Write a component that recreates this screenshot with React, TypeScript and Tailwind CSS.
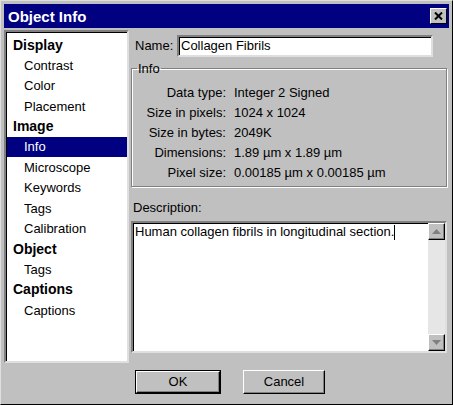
import React from 'react';

const navItems: { label: string; heading?: boolean; selected?: boolean }[] = [
  { label: 'Display', heading: true },
  { label: 'Contrast' },
  { label: 'Color' },
  { label: 'Placement' },
  { label: 'Image', heading: true },
  { label: 'Info', selected: true },
  { label: 'Microscope' },
  { label: 'Keywords' },
  { label: 'Tags' },
  { label: 'Calibration' },
  { label: 'Object', heading: true },
  { label: 'Tags' },
  { label: 'Captions', heading: true },
  { label: 'Captions' },
];

const infoRows = [
  ['Data type:', 'Integer 2 Signed'],
  ['Size in pixels:', '1024 x 1024'],
  ['Size in bytes:', '2049K'],
  ['Dimensions:', '1.89 µm x 1.89 µm'],
  ['Pixel size:', '0.00185 µm x 0.00185 µm'],
];

function ScrollButton({ up }: { up?: boolean }) {
  return (
    <div className="w-[17px] h-[17px] bg-[#c0c0c0] border border-t-white border-l-white border-b-black border-r-black shadow-[inset_-1px_-1px_0_#808080] flex items-center justify-center">
      <svg width="9" height="5" viewBox="0 0 9 5">
        {up ? <path d="M4.5 0 L9 5 L0 5 Z" fill="#808080" /> : <path d="M0 0 L9 0 L4.5 5 Z" fill="#808080" />}
      </svg>
    </div>
  );
}

export default function App() {
  return (
    <div
      className="w-[453px] h-[405px] bg-[#c0c0c0] text-[13px] text-black border border-t-[#dfdfdf] border-l-[#dfdfdf] border-b-black border-r-black p-[3px] flex flex-col"
      style={{ fontFamily: '"Liberation Sans", Arial, sans-serif' }}
    >
      {/* Title bar */}
      <div className="h-[24px] bg-[#000080] flex items-center justify-between pl-[4px] pr-[2px]">
        <span className="text-white font-bold text-[15px] leading-none">Object Info</span>
        <div className="w-[17px] h-[16px] bg-[#c0c0c0] border border-t-white border-l-white border-b-black border-r-black flex items-center justify-center">
          <svg width="9" height="8" viewBox="0 0 9 8">
            <path d="M1 0.5 L8 7.5 M8 0.5 L1 7.5" stroke="#000" strokeWidth="2" />
          </svg>
        </div>
      </div>

      <div className="flex flex-1 mt-[2px]">
        {/* Left tree list */}
        <div className="w-[125px] h-[333px] bg-white border-2 border-t-[#808080] border-l-[#808080] border-b-[#dfdfdf] border-r-[#dfdfdf] shadow-[inset_1px_1px_0_#000] pt-[3px] pl-[1px]">
          {navItems.map((item, i) => (
            <div
              key={i}
              className={
                'h-[20.4px] flex items-center ' +
                (item.heading ? 'pl-[6px] font-bold text-[14px] ' : 'pl-[17px] ') +
                (item.selected ? 'bg-[#000080] text-white' : '')
              }
            >
              {item.label}
            </div>
          ))}
        </div>

        {/* Right panel */}
        <div className="flex-1 pl-[2px] pr-[2px] flex flex-col">
          <div className="flex items-center mt-[5px] pl-[4px]">
            <span className="w-[42px]">Name:</span>
            <div className="w-[256px] h-[22px] bg-white border-2 border-t-[#808080] border-l-[#808080] border-b-[#dfdfdf] border-r-[#dfdfdf] shadow-[inset_1px_1px_0_#000] flex items-center pl-[2px]">
              Collagen Fibrils
            </div>
          </div>

          <fieldset className="mt-[4px] border border-[#808080] shadow-[1px_1px_0_white,inset_1px_1px_0_white] h-[126px] pl-0">
            <legend className="ml-[5px] px-[1px] leading-[15px]">Info</legend>
            <div className="grid grid-cols-[94px_1fr] gap-x-[8px] mt-[7px]">
              {infoRows.map(([k, v]) => (
                <React.Fragment key={k}>
                  <div className="text-right h-[20px] leading-[20px]">{k}</div>
                  <div className="h-[20px] leading-[20px]">{v}</div>
                </React.Fragment>
              ))}
            </div>
          </fieldset>

          <div className="mt-[13px] pl-[2px] leading-[16px]">Description:</div>

          <div className="mt-[5px] h-[132px] bg-white border-2 border-t-[#808080] border-l-[#808080] border-b-[#dfdfdf] border-r-[#dfdfdf] shadow-[inset_1px_1px_0_#000] flex">
            <div className="flex-1 pl-[2px] pt-[1px] leading-[16px]">
              Human collagen fibrils in longitudinal section.
              <span className="inline-block w-[1px] h-[15px] bg-black align-middle" />
            </div>
            <div className="w-[17px] flex flex-col bg-[#e6e6e6]">
              <ScrollButton up />
              <div className="flex-1" />
              <ScrollButton />
            </div>
          </div>

          <div className="flex mt-[17px] pl-[4px] gap-[22px]">
            <div className="w-[86px] h-[24px] border border-black">
              <div className="w-full h-full border border-t-white border-l-white border-b-black border-r-black shadow-[inset_-1px_-1px_0_#808080] flex items-center justify-center">
                OK
              </div>
            </div>
            <div className="w-[82px] h-[24px] border border-t-white border-l-white border-b-black border-r-black shadow-[inset_-1px_-1px_0_#808080] flex items-center justify-center">
              Cancel
            </div>
          </div>
        </div>
      </div>
    </div>
  );
}
